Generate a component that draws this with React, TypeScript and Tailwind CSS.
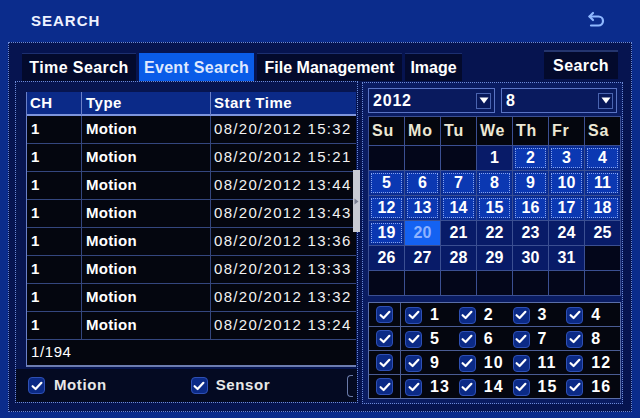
import React from 'react';

const times = ['15:32', '15:21', '13:44', '13:43', '13:36', '13:33', '13:32', '13:24'];
const days = ['Su', 'Mo', 'Tu', 'We', 'Th', 'Fr', 'Sa'];

type Kind = 'empty' | 'data' | 'plain' | 'sel';
type Cell = { d?: number; k: Kind };

function buildMonth(): Cell[] {
  const cells: Cell[] = [];
  for (let i = 0; i < 3; i++) cells.push({ k: 'empty' });
  for (let d = 1; d <= 31; d++) {
    let k: Kind = 'plain';
    if (d >= 2 && d <= 19) k = 'data';
    if (d === 20) k = 'sel';
    cells.push({ d, k });
  }
  while (cells.length < 42) cells.push({ k: 'empty' });
  return cells;
}

const month = buildMonth();

function Check() {
  return (
    <span className="flex h-[17px] w-[17px] shrink-0 items-center justify-center rounded-[4px] border border-[#2f50b4] bg-[#0b2a86]">
      <svg width="12" height="10" viewBox="0 0 12 10">
        <path d="M1.6 5.2 4.6 8 10.4 1.8" stroke="white" strokeWidth="2.2" fill="none" strokeLinecap="round" strokeLinejoin="round" />
      </svg>
    </span>
  );
}

function Caret() {
  return (
    <span className="flex h-[16px] w-[15px] items-center justify-center border border-[#4a64b0] bg-[#08185a]">
      <svg width="10" height="7" viewBox="0 0 10 7">
        <path d="M0.5 0.5h9L5 6.5z" fill="white" />
      </svg>
    </span>
  );
}

function DayCell({ c }: { c: Cell }) {
  if (c.k === 'empty') return <div className="bg-[#03061a]" />;
  if (c.k === 'sel')
    return <div className="flex items-center justify-center bg-[#1462f2] text-[#8db2ff]">{c.d}</div>;
  if (c.k === 'plain')
    return <div className="flex items-center justify-center bg-[#081b68]">{c.d}</div>;
  return (
    <div className="bg-[#0a2c92] p-[2px]">
      <div className="flex h-full items-center justify-center border border-dotted border-[#86a4f0] bg-[#0b38b2]">{c.d}</div>
    </div>
  );
}

export default function App() {
  return (
    <div className="relative h-[418px] w-[640px] overflow-hidden bg-[#0b2c8c] font-['Liberation_Sans',Arial,sans-serif] text-white">
      <header className="flex h-[42px] items-center justify-between pl-[31px] pr-[34px]">
        <span className="text-[15px] font-bold tracking-[1px] text-[#eef2ff]">SEARCH</span>
        <svg width="19" height="20" viewBox="0 0 19 20" fill="none" stroke="#8fb8ff" strokeWidth="2.2" strokeLinecap="round" strokeLinejoin="round">
          <path d="M6 2 2.5 5.5 6 9" />
          <path d="M2.5 5.5h9a4.5 4.5 0 0 1 0 9H4" />
        </svg>
      </header>

      <div className="mx-[8px] h-[370px] border border-dotted border-[#6d8ad6] bg-[#061450]">
        <div className="flex h-[38px] pl-[13px] pr-[13px]">
          <div className="mt-[10px] flex h-[28px] gap-[3px] text-[16px] font-bold">
            <div className="flex w-[114px] items-center justify-center border-t border-[#1c2f70] bg-[#030a2c] tracking-[0.4px]">Time Search</div>
            <div className="flex h-[30px] w-[115px] items-center justify-center bg-[#0a5ce8] tracking-[0.3px] text-[#dfe8ff]">Event Search</div>
            <div className="flex w-[145px] items-center justify-center border-t border-[#1c2f70] bg-[#030a2c]">File Management</div>
            <div className="flex w-[57px] items-center justify-center border-t border-[#1c2f70] bg-[#030a2c]">Image</div>
          </div>
          <div className="ml-auto mt-[7px] flex h-[29px] w-[74px] items-center justify-center border-t-2 border-[#24356e] bg-[#030a2c] text-[16px] font-bold tracking-[0.4px]">
            Search
          </div>
        </div>

        <div className="flex gap-[4px] pl-[6px]">
          {/* left: event list */}
          <div className="relative h-[322px] w-[343px] border border-dotted border-[#6d8ad6] bg-[#071550] pl-[10px] pt-[10px]">
            <div className="w-[330px] border-l border-[#6a80c8] bg-[#04060f] text-[15px] font-bold">
              <div className="grid h-[24px] grid-cols-[54px_129px_1fr] border-b-2 border-[#7d94dc] bg-[#0b2a88]">
                <div className="flex items-center pl-[3px] tracking-[0.5px]">CH</div>
                <div className="flex items-center border-l border-[#6a80c8] pl-[4px] tracking-[0.5px]">Type</div>
                <div className="flex items-center border-l border-[#6a80c8] pl-[3px] tracking-[0.5px]">Start Time</div>
              </div>
              {times.map((t) => (
                <div key={t} className="grid h-[28px] grid-cols-[54px_129px_1fr] border-b border-[#34467e]">
                  <div className="flex items-center pl-[4px]">1</div>
                  <div className="flex items-center border-l border-[#34467e] pl-[4px] tracking-[0.3px]">Motion</div>
                  <div className="flex items-center border-l border-[#34467e] pl-[3px] font-normal tracking-[1.3px] text-[#f2f2f2]">
                    08/20/2012 {t}
                  </div>
                </div>
              ))}
              <div className="flex h-[27px] items-center border-b-2 border-[#6c7cb0] pl-[4px] font-normal tracking-[0.6px]">1/194</div>
            </div>
            <div className="-ml-[10px] mt-[2px] flex h-[33px] items-center bg-[#040a22] pl-[12px] text-[15px] font-bold tracking-[0.6px]">
              <Check />
              <span className="ml-[9px] text-[#e8e8e8]">Motion</span>
              <span className="ml-[84px]"><Check /></span>
              <span className="ml-[8px] text-[#e8e8e8]">Sensor</span>
              <span className="ml-auto mr-[4px] h-[22px] w-[6px] rounded-l-[4px] border border-r-0 border-[#6a7aa8]" />
            </div>
            <div className="absolute left-[337px] top-[88px] flex h-[62px] w-[7px] items-center justify-center bg-[#c8cad2]">
              <svg width="5" height="7" viewBox="0 0 5 7"><path d="M0.5 0.5 4.5 3.5 0.5 6.5z" fill="#7a7f90" /></svg>
            </div>
          </div>

          {/* right: calendar + channels */}
          <div className="mt-[1px] h-[322px] w-[261px] border border-dotted border-[#6d8ad6] bg-[#0a1c62] px-[5px] pt-[5px] text-[16px] font-bold">
            <div className="flex h-[25px] gap-[6px]">
              <div className="flex w-[127px] items-center justify-between border border-[#5a74c4] bg-[#091a5e] pl-[4px] pr-[3px] tracking-[0.8px]">
                2012
                <Caret />
              </div>
              <div className="flex w-[116px] items-center justify-between border border-[#5a74c4] bg-[#091a5e] pl-[4px] pr-[3px]">
                8
                <Caret />
              </div>
            </div>

            <div className="mt-[3px] grid w-[253px] grid-cols-7 grid-rows-[28px_repeat(6,24px)] gap-px border border-[#3b4f92] bg-[#3b4f92]">
              {days.map((d) => (
                <div key={d} className="flex items-center bg-[#04060e] pl-[3px] tracking-[0.8px] text-[#ece8d4]">{d}</div>
              ))}
              {month.map((c, i) => (
                <DayCell key={i} c={c} />
              ))}
            </div>

            <div className="mt-[6px] grid w-[253px] grid-cols-[31px_1fr] grid-rows-[repeat(4,23px)] gap-px border border-[#5a6ea8] bg-[#4a5c94]">
              {[0, 1, 2, 3].map((r) => (
                <React.Fragment key={r}>
                  <div className="flex items-center justify-center bg-[#04060f]">
                    <Check />
                  </div>
                  <div className="grid grid-cols-4 bg-[#04060f] pl-[4px]">
                    {[1, 2, 3, 4].map((c) => (
                      <div key={c} className="flex items-center gap-[8px]">
                        <Check />
                        <span className="tracking-[1px]">{r * 4 + c}</span>
                      </div>
                    ))}
                  </div>
                </React.Fragment>
              ))}
            </div>
          </div>
        </div>
      </div>
    </div>
  );
}
